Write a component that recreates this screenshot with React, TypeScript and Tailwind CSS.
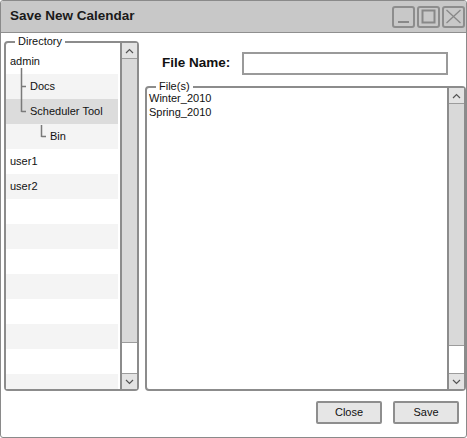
import React from 'react';

type TreeRow = { label: string; indent: 0 | 1 | 2; selected?: boolean };

const TREE: TreeRow[] = [
  { label: 'admin', indent: 0 },
  { label: 'Docs', indent: 1 },
  { label: 'Scheduler Tool', indent: 1, selected: true },
  { label: 'Bin', indent: 2 },
  { label: 'user1', indent: 0 },
  { label: 'user2', indent: 0 },
  ...Array.from({ length: 8 }, () => ({ label: '', indent: 0 as const })),
];

const FILES = ['Winter_2010', 'Spring_2010'];

function Chevron({ up }: { up?: boolean }) {
  return (
    <svg width="9" height="6" viewBox="0 0 9 6">
      <polyline
        points={up ? '1,5 4.5,1.5 8,5' : '1,1 4.5,4.5 8,1'}
        fill="none"
        stroke="#555"
        strokeWidth="1.2"
      />
    </svg>
  );
}

/** Fake scrollbar: up arrow, thumb, empty track, down arrow */
function ScrollBar({ gap }: { gap: number }) {
  return (
    <div className="flex w-[17px] flex-col border-l-2 border-[#8c8c8c] bg-white">
      <div className="flex h-[16px] items-center justify-center border-b border-[#9c9c9c] bg-[#e3e3e3]">
        <Chevron up />
      </div>
      <div className="flex-1 border-b border-[#9c9c9c] bg-[#d9d9d9]" />
      <div className="bg-white" style={{ height: gap }} />
      <div className="flex h-[16px] items-center justify-center border-t border-[#9c9c9c] bg-[#e3e3e3]">
        <Chevron />
      </div>
    </div>
  );
}

function TitleButton({ children }: { children: React.ReactNode }) {
  return (
    <div className="flex h-[22px] w-[23px] items-center justify-center rounded-[3px] border-2 border-[#8d8d8d]">
      {children}
    </div>
  );
}

export default function App() {
  return (
    <div className="h-[438px] w-[467px] overflow-hidden rounded-[3px] border border-[#8a8a8a] bg-white font-['Liberation_Sans',Arial,sans-serif] text-[#111]">
      {/* Title bar */}
      <div className="flex h-[32px] items-center justify-between border-b border-[#8f8f8f] bg-[#c8c8c8] pl-[9px] pr-[1px]">
        <span className="text-[13.5px] font-bold text-[#1a1a1a]">Save New Calendar</span>
        <div className="flex gap-[2px]">
          <TitleButton>
            <svg width="15" height="15" viewBox="0 0 15 15">
              <line x1="2" y1="13" x2="13" y2="13" stroke="#888" strokeWidth="2" />
            </svg>
          </TitleButton>
          <TitleButton>
            <svg width="15" height="15" viewBox="0 0 15 15">
              <rect x="1.5" y="1.5" width="12" height="12" fill="none" stroke="#888" strokeWidth="2" />
            </svg>
          </TitleButton>
          <TitleButton>
            <svg width="17" height="15" viewBox="0 0 17 15">
              <line x1="1.5" y1="1" x2="15.5" y2="14" stroke="#888" strokeWidth="1.3" />
              <line x1="15.5" y1="1" x2="1.5" y2="14" stroke="#888" strokeWidth="1.3" />
            </svg>
          </TitleButton>
        </div>
      </div>

      {/* Body */}
      <div className="flex flex-col">
        <div className="mt-[8px] flex h-[350px] gap-[6px] pl-[3px]">
          {/* Directory */}
          <div className="relative flex w-[135px] rounded-[4px] border-2 border-[#8c8c8c]">
            <span className="absolute -top-[8px] left-[9px] bg-white px-[3px] text-[11px] leading-[13px]">
              Directory
            </span>
            <div className="relative flex-1 overflow-hidden pr-[2px] pt-[6px]">
              {TREE.map((row, i) => {
                const bg = row.selected ? 'bg-[#dcdcdc]' : i % 2 === 1 ? 'bg-[#f4f4f4]' : 'bg-white';
                const pad = row.indent === 0 ? 'pl-[4px]' : row.indent === 1 ? 'pl-[24px]' : 'pl-[44px]';
                return (
                  <div key={i} className={`h-[25px] text-[11px] leading-[25px] ${bg} ${pad}`}>
                    {row.label}
                  </div>
                );
              })}
              <svg className="pointer-events-none absolute inset-0" width="115" height="120">
                <g stroke="#7a7a7a" strokeWidth="1.5" fill="none">
                  <line x1="15.5" y1="25" x2="15.5" y2="69" />
                  <line x1="15.5" y1="43.5" x2="20" y2="43.5" />
                  <line x1="15.5" y1="68.5" x2="20" y2="68.5" />
                  <line x1="35.5" y1="82" x2="35.5" y2="94" />
                  <line x1="35.5" y1="93.5" x2="40" y2="93.5" />
                </g>
              </svg>
            </div>
            <ScrollBar gap={30} />
          </div>

          {/* Right column */}
          <div className="flex flex-1 flex-col">
            <div className="mt-[11px] flex h-[23px] items-center">
              <span className="ml-[17px] text-[13.5px] font-bold">File Name:</span>
              <input className="ml-[12px] h-[23px] w-[206px] border-2 border-[#9a9a9a] bg-white px-1 text-[11px] outline-none" />
            </div>
            <div className="relative mt-[11px] flex flex-1 rounded-[4px] border-2 border-[#8c8c8c]">
              <span className="absolute -top-[8px] left-[9px] bg-white px-[3px] text-[11px] leading-[13px]">
                File(s)
              </span>
              <div className="flex-1 pl-[2px] pt-[3px] text-[11px] leading-[14px]">
                {FILES.map(f => (
                  <div key={f}>{f}</div>
                ))}
              </div>
              <ScrollBar gap={27} />
            </div>
          </div>
        </div>

        {/* Buttons */}
        <div className="mt-[10px] flex justify-end gap-[11px] pr-[7px]">
          <button className="h-[23px] w-[66px] rounded-[2px] border-2 border-[#8e8e8e] bg-[#e6e6e6] text-[11px]">
            Close
          </button>
          <button className="h-[23px] w-[66px] rounded-[2px] border-2 border-[#8e8e8e] bg-[#e6e6e6] text-[11px]">
            Save
          </button>
        </div>
      </div>
    </div>
  );
}
